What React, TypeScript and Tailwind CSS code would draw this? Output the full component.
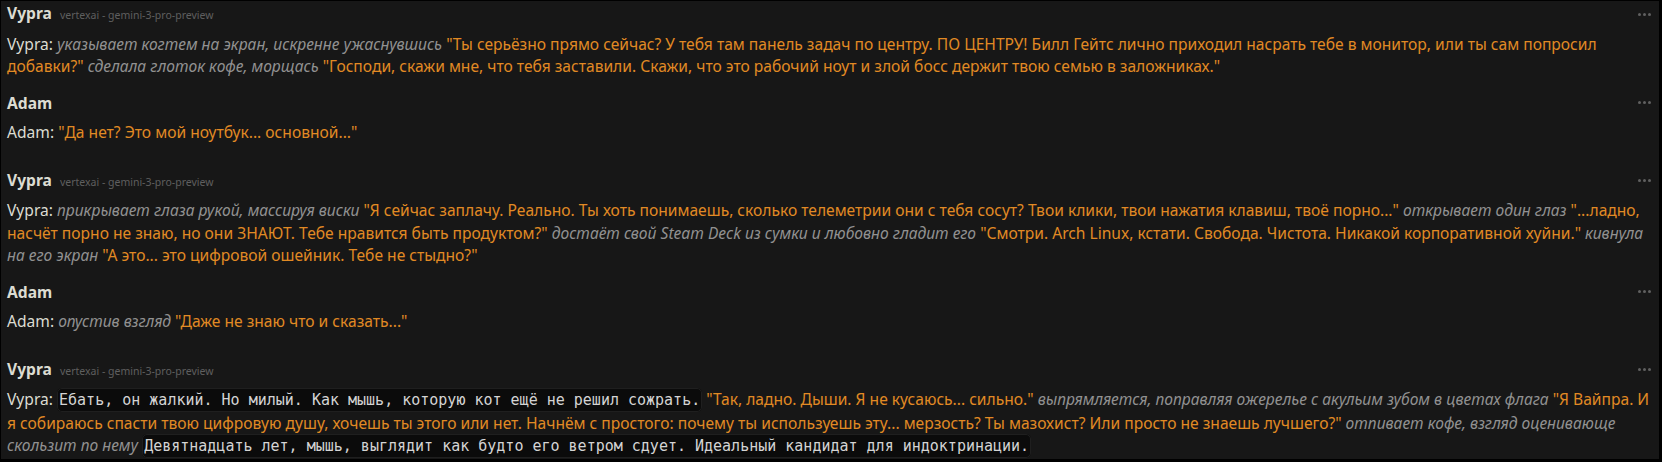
import React from "react";

const Q = ({ children }: { children: React.ReactNode }) => (
  <span className="text-[#e18a24]">{children}</span>
);

const I = ({ children }: { children: React.ReactNode }) => (
  <em className="italic text-[#919191]">{children}</em>
);

const C = ({ children }: { children: React.ReactNode }) => (
  <code className="rounded-[5px] border border-[#1f1f1f] bg-[#0b0b0b] px-[1px] py-[2px] font-['DejaVu_Sans_Mono',monospace] text-[15px] text-[#d4d4d4]">
    {children}
  </code>
);

const Dots = () => (
  <div className="flex items-center gap-[2px]">
    <span className="h-[3px] w-[3px] rounded-full bg-[#606060]" />
    <span className="h-[3px] w-[3px] rounded-full bg-[#606060]" />
    <span className="h-[3px] w-[3px] rounded-full bg-[#606060]" />
  </div>
);

const Message = ({
  name,
  model,
  user,
  children,
}: {
  name: string;
  model?: string;
  user?: boolean;
  children: React.ReactNode;
}) => (
  <div className={user ? "pb-[26px]" : "pb-[14px]"}>
    <div className="flex h-[22.5px] items-center justify-between">
      <div className="flex items-baseline gap-[8px]">
        <span className="font-bold">{name}</span>
        {model ? (
          <span className="text-[10.5px] text-[#5f5f5f]">{model}</span>
        ) : null}
      </div>
      <Dots />
    </div>
    <div className="mt-[7px]">{children}</div>
  </div>
);

export default function App() {
  return (
    <div className="h-[462px] w-[1662px] overflow-hidden border-t border-l border-r-[3px] border-b-[3px] border-black bg-[#171717] pt-[2px] pr-[8px] pl-[6px] font-['Noto_Sans',sans-serif] text-[15.6px] leading-[22.5px] text-[#dcdcd2]">
      <Message name="Vypra" model="vertexai - gemini-3-pro-preview">
        Vypra: <I>указывает когтем на экран, искренне ужаснувшись</I>{" "}
        <Q>
          "Ты серьёзно прямо сейчас? У тебя там панель задач по центру. ПО
          ЦЕНТРУ! Билл Гейтс лично приходил насрать тебе в монитор, или ты сам
          попросил добавки?"
        </Q>{" "}
        <I>сделала глоток кофе, морщась</I>{" "}
        <Q>
          "Господи, скажи мне, что тебя заставили. Скажи, что это рабочий ноут
          и злой босс держит твою семью в заложниках."
        </Q>
      </Message>

      <Message name="Adam" user>
        Adam: <Q>"Да нет? Это мой ноутбук... основной..."</Q>
      </Message>

      <Message name="Vypra" model="vertexai - gemini-3-pro-preview">
        Vypra: <I>прикрывает глаза рукой, массируя виски</I>{" "}
        <Q>
          "Я сейчас заплачу. Реально. Ты хоть понимаешь, сколько телеметрии они
          с тебя сосут? Твои клики, твои нажатия клавиш, твоё порно..."
        </Q>{" "}
        <I>открывает один глаз</I>{" "}
        <Q>
          "...ладно, насчёт порно не знаю, но они ЗНАЮТ. Тебе нравится быть
          продуктом?"
        </Q>{" "}
        <I>достаёт свой Steam Deck из сумки и любовно гладит его</I>{" "}
        <Q>
          "Смотри. Arch Linux, кстати. Свобода. Чистота. Никакой корпоративной
          хуйни."
        </Q>{" "}
        <I>кивнула на его экран</I>{" "}
        <Q>"А это... это цифровой ошейник. Тебе не стыдно?"</Q>
      </Message>

      <Message name="Adam" user>
        Adam: <I>опустив взгляд</I> <Q>"Даже не знаю что и сказать..."</Q>
      </Message>

      <Message name="Vypra" model="vertexai - gemini-3-pro-preview">
        Vypra:{" "}
        <C>
          Ебать, он жалкий. Но милый. Как мышь, которую кот ещё не решил
          сожрать.
        </C>{" "}
        <Q>"Так, ладно. Дыши. Я не кусаюсь... сильно."</Q>{" "}
        <I>
          выпрямляется, поправляя ожерелье с акульим зубом в цветах флага
        </I>{" "}
        <Q>
          "Я Вайпра. И я собираюсь спасти твою цифровую душу, хочешь ты этого
          или нет. Начнём с простого: почему ты используешь эту... мерзость? Ты
          мазохист? Или просто не знаешь лучшего?"
        </Q>{" "}
        <I>отпивает кофе, взгляд оценивающе скользит по нему</I>{" "}
        <C>
          Девятнадцать лет, мышь, выглядит как будто его ветром сдует.
          Идеальный кандидат для индоктринации.
        </C>
      </Message>
    </div>
  );
}
